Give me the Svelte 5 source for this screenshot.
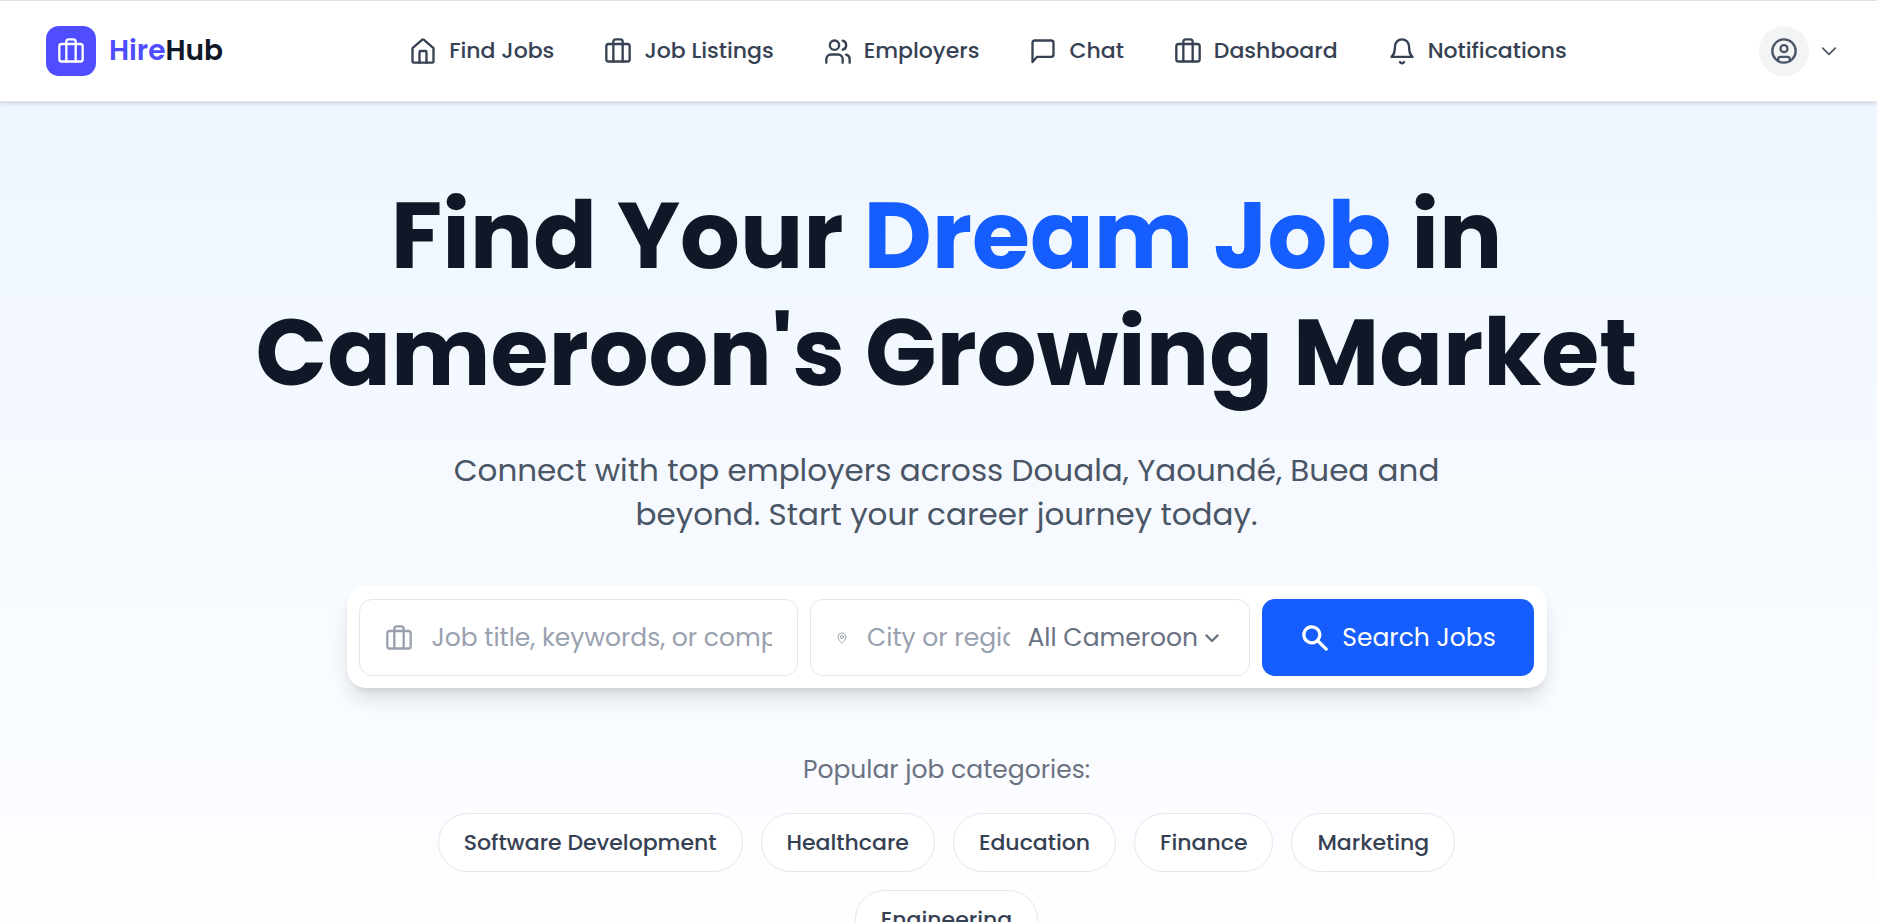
<script>
  const nav = [
    { label: 'Find Jobs', icon: 'home' },
    { label: 'Job Listings', icon: 'case' },
    { label: 'Employers', icon: 'users' },
    { label: 'Chat', icon: 'chat' },
    { label: 'Dashboard', icon: 'case' },
    { label: 'Notifications', icon: 'bell' }
  ];
  const categories = ['Software Development', 'Healthcare', 'Education', 'Finance', 'Marketing', 'Engineering'];
</script>

{#snippet icon(name)}
  <svg class="icon" viewBox="0 0 24 24" fill="none" stroke="currentColor" stroke-width="2" stroke-linecap="round" stroke-linejoin="round" aria-hidden="true">
    {#if name === 'home'}
      <path d="m3 9.500 8.400-7.200a1 1 0 0 1 1.200 0L21 9.500V21a1 1 0 0 1-1 1H4a1 1 0 0 1-1-1z" />
      <path d="M9 22v-9a1 1 0 0 1 1-1h4a1 1 0 0 1 1 1v9" />
    {:else if name === 'case'}
      <rect x="2" y="6" width="20" height="15" rx="2" />
      <path d="M8 21V4a2 2 0 0 1 2-2h4a2 2 0 0 1 2 2v17" />
    {:else if name === 'users'}
      <path d="M16 22v-3a4 4 0 0 0-4-4H6a4 4 0 0 0-4 4v3" />
      <circle cx="9" cy="7" r="4" />
      <path d="M22 22v-3a4 4 0 0 0-3-3.870M16 3.130a4 4 0 0 1 0 7.750" />
    {:else if name === 'chat'}
      <path d="M21 15a2 2 0 0 1-2 2H7l-4 4.500V5a2 2 0 0 1 2-2h14a2 2 0 0 1 2 2z" />
    {:else if name === 'bell'}
      <path d="M6 8a6 6 0 0 1 12 0c0 7 3 9 3 9H3s3-2 3-9M10.300 21.500a1.940 1.940 0 0 0 3.400 0" />
    {:else if name === 'user'}
      <circle cx="12" cy="12" r="10" />
      <circle cx="12" cy="10" r="3" />
      <path d="M7 20.660V19a2 2 0 0 1 2-2h6a2 2 0 0 1 2 2v1.660" />
    {:else if name === 'pin'}
      <path d="M20 10c0 5-5.500 10.200-7.400 11.800a1 1 0 0 1-1.200 0C9.500 20.200 4 15 4 10a8 8 0 0 1 16 0" />
      <circle cx="12" cy="10" r="3" />
    {:else if name === 'down'}
      <path d="m4.500 8.500 7.500 7.500 7.500-7.500" />
    {/if}
  </svg>
{/snippet}

<header>
  <a class="brand" href="#home">
    <span class="logo">{@render icon('case')}</span>
    <span class="name"><span>Hire</span>Hub</span>
  </a>
  <nav aria-label="Main">
    {#each nav as item}
      <a href="#{item.label}">{@render icon(item.icon)}{item.label}</a>
    {/each}
  </nav>
  <button class="account" aria-label="Account menu">
    <span class="avatar">{@render icon('user')}</span>
    <span class="small">{@render icon('down')}</span>
  </button>
</header>

<main>
  <h1>Find Your <span>Dream Job</span> in<br />Cameroon's Growing Market</h1>
  <p class="lead">Connect with top employers across Douala, Yaoundé, Buea and<br />beyond. Start your career journey today.</p>

  <form onsubmit={(e) => e.preventDefault()}>
    <label class="field">
      {@render icon('case')}
      <input type="text" aria-label="Job title" placeholder="Job title, keywords, or company" />
    </label>
    <div class="field place">
      <span class="pin">{@render icon('pin')}</span>
      <input type="text" aria-label="City or region" placeholder="City or region" />
      <span class="region">
        <select aria-label="Region"><option>All Cameroon</option></select>
        {@render icon('down')}
      </span>
    </div>
    <button class="search" type="submit">
      <svg class="icon" viewBox="0 0 20 20" fill="currentColor" aria-hidden="true"><path fill-rule="evenodd" d="M8 4a4 4 0 1 0 0 8 4 4 0 0 0 0-8zM2 8a6 6 0 1 1 10.890 3.476l4.817 4.817a1 1 0 0 1-1.414 1.414l-4.816-4.816A6 6 0 0 1 2 8z" /></svg>
      Search Jobs
    </button>
  </form>

  <p class="popular">Popular job categories:</p>
  <div class="tags">
    {#each categories as c}
      <button>{c}</button>
    {/each}
  </div>
</main>

<style>
  :global(body) {
    margin: 0;
    height: 100vh;
    overflow: hidden;
    background: #fff;
  }
  :global(#app), button, input, select {
    font-family: Poppins, Inter, sans-serif;
  }
  * { box-sizing: border-box; }
  a { text-decoration: none; color: inherit; }
  button { border: 0; background: none; padding: 0; color: inherit; cursor: pointer; }
  .icon { width: 28px; height: 28px; flex: none; display: block; }
  header {
    display: flex;
    justify-content: space-between;
    align-items: center;
    position: relative;
    height: 102px;
    padding: 0 38px 0 46px;
    background: #fff;
    border-top: 1px solid #dedfe2;
    border-bottom: 1px solid #e5e7eb;
    box-shadow: 0 1px 4px rgba(0, 0, 0, 0.18);
    color: #364153;
  }
  .brand { display: flex; align-items: center; gap: 13px; }
  .logo {
    display: grid;
    place-items: center;
    width: 50px;
    height: 50px;
    border-radius: 13px;
    background: #4f4dff;
    color: #fff;
  }
  .name { font-size: 28px; font-weight: 600; color: #101828; }
  .name span { color: #4f4dff; }
  nav { display: flex; gap: 50px; margin-right: 6px; }
  nav a { display: flex; align-items: center; gap: 12px; font-size: 22px; line-height: 32px; font-weight: 500; }
  .account { display: flex; align-items: center; gap: 10px; color: #4a5565; }
  .avatar {
    display: grid;
    place-items: center;
    width: 50px;
    height: 50px;
    border-radius: 50%;
    background: #f3f4f6;
  }
  .small .icon { width: 20px; height: 20px; }
  main {
    display: flex;
    flex-direction: column;
    align-items: center;
    padding: 75px 0 120px 16px;
    background: linear-gradient(#eff6ff, #fff);
    text-align: center;
  }
  h1 { margin: 0; font-size: 94px; line-height: 117px; font-weight: 700; color: #101828; }
  h1 span { color: #155dfc; }
  .lead { margin: 37px 0 0; font-size: 31px; line-height: 44px; color: #4a5565; }
  form {
    display: grid;
    grid-template-columns: 1fr 1fr 272px;
    gap: 12px;
    width: 1200px;
    max-width: 100%;
    margin-top: 50px;
    padding: 13px 13px 12px 12px;
    border-radius: 19px;
    background: #fff;
    box-shadow: 0 13px 22px -4px rgba(0, 0, 0, 0.14), 0 5px 8px -5px rgba(0, 0, 0, 0.12);
  }
  .field {
    display: flex;
    align-items: center;
    min-width: 0;
    height: 77px;
    padding: 0 25px;
    border: 1px solid #e5e7eb;
    border-radius: 13px;
    color: #99a1af;
  }
  .place { padding-right: 28px; }
  .field input {
    flex: 1;
    min-width: 0;
    margin-left: 19px;
    padding: 0;
    border: 0;
    outline: 0;
    background: none;
    font-size: 25px;
    color: #101828;
  }
  .field input::placeholder { color: #99a1af; opacity: 1; }
  .pin .icon { width: 12px; height: 12px; }
  .region { display: flex; align-items: center; gap: 4px; margin-left: 18px; color: #6a7282; }
  .region select { appearance: none; border: 0; padding: 0; background: none; font-size: 25px; color: inherit; }
  .region .icon { width: 18px; height: 18px; stroke-width: 3; }
  .search {
    display: flex;
    align-items: center;
    justify-content: center;
    gap: 11px;
    border-radius: 13px;
    background: #155dfc;
    color: #fff;
    font-size: 25px;
  }
  .search .icon { width: 32px; height: 32px; }
  .popular { margin: 63px 0 0; font-size: 25px; line-height: 38px; color: #6a7282; }
  .tags { display: flex; flex-wrap: wrap; justify-content: center; gap: 18px; max-width: 1120px; margin-top: 24px; }
  .tags button {
    height: 59px;
    padding: 0 25px;
    border: 1px solid #e5e7eb;
    border-radius: 30px;
    background: #fff;
    font-size: 22px;
    font-weight: 500;
    color: #364153;
  }
</style>
